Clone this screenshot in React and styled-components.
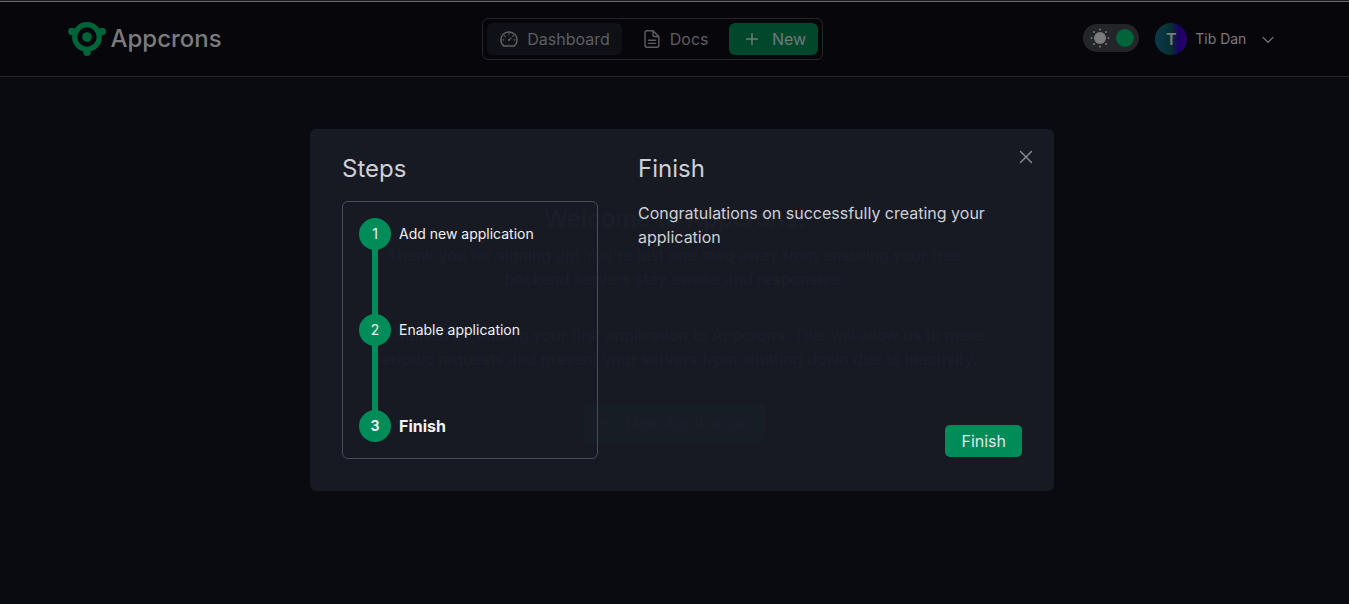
import React from 'react';
import styled, { createGlobalStyle } from 'styled-components';
import { AiOutlineDashboard } from 'react-icons/ai';

const Global = createGlobalStyle`
  * { box-sizing: border-box; }
  body { margin: 0; background: #0a0b10; color: #7b7b7e; font: 400 16px/24px Inter, sans-serif; overflow: hidden; }
  h1, h2, p { margin: 0; font-weight: 400; }
  button { font: inherit; color: inherit; border: 0; background: none; padding: 0; }
  svg { display: block; flex: none; }
`;
const Page = styled.div`
  height: 604px;
  border-top: 1px solid #1b1b1f;
`;
const Header = styled.header`
  height: 76px;
  padding: 0 75px 0 68px;
  display: flex;
  justify-content: space-between;
  align-items: center;
  background: #06060b;
  border-top: 1px solid #68686a;
  border-bottom: 1px solid #242529;
`;
const Brand = styled.div`
  display: flex;
  align-items: center;
  gap: 4.5px;
  font-size: 24px;
  font-weight: 500;
`;
const Nav = styled.nav`
  display: flex;
  align-items: center;
  gap: 8px;
  height: 42px;
  padding: 4px;
  border: 1px solid #252529;
  border-radius: 6px;
  color: #5e5e63;
`;
const NavItem = styled.a`
  display: flex;
  align-items: center;
  gap: 8px;
  height: 32px;
  padding: 0 12px;
  border-radius: 6px;
  background: ${(p) => (p.$active ? '#101116' : 'transparent')};
`;
const NewItem = styled(NavItem)`
  gap: 14px;
  padding: 0 11.5px 0 17.5px;
  background: #00472c;
  color: #727a78;
`;
const Account = styled.div`
  display: flex;
  align-items: center;
  font-size: 14px;
`;
const Toggle = styled.div`
  width: 56px;
  height: 28px;
  border-radius: 14px;
  background: #242529;
  display: flex;
  align-items: center;
  justify-content: space-between;
  padding: 0 5px 0 7px;
  margin: 0 16px 2px 0;
`;
const Knob = styled.span`
  width: 18px;
  height: 18px;
  border-radius: 50%;
  background: #00643b;
`;
const Avatar = styled.div`
  width: 32px;
  height: 32px;
  border-radius: 50%;
  background: linear-gradient(90deg, #0c3a50, #06302e 50%, #1c0065 75%, #280070);
  display: grid;
  place-items: center;
  font-weight: 600;
  font-size: 16px;
  margin-right: 8px;
`;
const UserName = styled.span`
  margin-right: 15.6px;
`;
const Main = styled.main`
  display: flex;
  justify-content: center;
  padding-top: 99px;
`;
const Welcome = styled.section`
  width: 700px;
  padding: 26px 0 32px;
  border: 1px solid #242529;
  border-radius: 6px;
  text-align: center;
  color: #66666b;
  display: flex;
  flex-direction: column;
  align-items: center;
`;
const WelcomeTitle = styled.h2`
  font-size: 24px;
  line-height: 32px;
  font-weight: 500;
  margin-bottom: 8px;
`;
const WelcomeText = styled.p`
  margin-bottom: 32px;
`;
const NewApplication = styled.button`
  display: flex;
  align-items: center;
  gap: 14px;
  height: 40px;
  padding: 0 16px;
  border-radius: 6px;
  background: #00593a;
`;
const Dialog = styled.section`
  position: absolute;
  left: 310px;
  top: 129px;
  width: 744px;
  height: 362px;
  padding: 24px 32px 32px;
  border-radius: 6px;
  background: rgba(24, 27, 36, 0.96);
  color: #cfd0d8;
  display: grid;
  grid-template-columns: 256px 1fr;
  column-gap: 40px;
`;
const Column = styled.div`
  display: flex;
  flex-direction: column;
`;
const Title = styled.h2`
  font-size: 24px;
  line-height: 32px;
  margin-bottom: 16px;
`;
const Steps = styled.div`
  height: 258px;
  border: 1px solid #494b56;
  border-radius: 6px;
  padding: 16px;
`;
const Step = styled.div`
  display: flex;
  align-items: center;
  gap: 8px;
  height: 32px;
  color: #f1f1f3;
  font-size: ${(p) => (p.$current ? 16 : 14)}px;
  font-weight: ${(p) => (p.$current ? 700 : 400)};
`;
const StepNumber = styled.span`
  width: 32px;
  height: 32px;
  border-radius: 50%;
  background: #008c59;
  display: grid;
  place-items: center;
  font-size: 14px;
`;
const Connector = styled.div`
  width: 6px;
  height: 66px;
  margin: -1px 0 -1px 13px;
  background: #008c59;
`;
const Close = styled.button`
  position: absolute;
  right: 21px;
  top: 21px;
  color: #8c8e98;
`;
const FinishButton = styled.button`
  height: 32px;
  padding: 0 16px;
  border-radius: 5px;
  background: #008c59;
  color: #dfe9e6;
  align-self: flex-end;
  margin: auto 0 2px;
`;

const Logo = () => (
  <svg width="38" height="34" viewBox="0 0 38 34" fill="#00643b">
    <circle cx="19" cy="15" r="12.3" fill="none" stroke="#00643b" strokeWidth="5.2" />
    <circle cx="19" cy="15" r="4.8" />
    <circle cx="3.8" cy="9.5" r="3.7" />
    <circle cx="34.2" cy="9.5" r="3.7" />
    <circle cx="19" cy="30.2" r="3.7" />
  </svg>
);
const Sun = () => (
  <svg width="20" height="20" viewBox="0 0 20 20" fill="#7b7b7e">
    <circle cx="10" cy="10" r="6" />
    {[0, 45, 90, 135, 180, 225, 270, 315].map((a) => (
      <circle key={a} cx="10" cy="1.5" r="0.95" transform={`rotate(${a} 10 10)`} />
    ))}
  </svg>
);
const FileText = () => (
  <svg width="20" height="20" viewBox="0 0 20 20" fill="none" stroke="currentColor" strokeWidth="1.4" strokeLinecap="round" strokeLinejoin="round">
    <path d="M11 1.7H5a2 2 0 0 0-2 2v12.6a2 2 0 0 0 2 2h9.8a2 2 0 0 0 2-2V7.5L11 1.7v4.2a1.6 1.6 0 0 0 1.6 1.6h4.2M6.5 11.2h7M6.5 14.4h7" />
  </svg>
);
const Plus = () => (
  <svg width="12" height="12" viewBox="0 0 12 12" stroke="currentColor" strokeWidth="1.4">
    <path d="M6 0v12M0 6h12" />
  </svg>
);
const Chevron = () => (
  <svg width="12" height="12" viewBox="0 0 12 12" fill="none" stroke="currentColor" strokeWidth="1.2" strokeLinecap="round" strokeLinejoin="round">
    <path d="M1 4.3l5 5 5-5" />
  </svg>
);
const Cross = () => (
  <svg width="14" height="14" viewBox="0 0 14 14" stroke="currentColor" strokeWidth="1.4" strokeLinecap="round">
    <path d="M1.5 1.5l11 11M12.5 1.5l-11 11" />
  </svg>
);
const steps = ['Add new application', 'Enable application', 'Finish'];

export default function App() {
  return (
    <Page>
      <Global />
      <Header>
        <Brand><Logo />Appcrons</Brand>
        <Nav>
          <NavItem $active><AiOutlineDashboard size={20} />Dashboard</NavItem>
          <NavItem><FileText />Docs</NavItem>
          <NewItem><Plus />New</NewItem>
        </Nav>
        <Account>
          <Toggle><Sun /><Knob /></Toggle>
          <Avatar>T</Avatar>
          <UserName>Tib Dan</UserName>
          <Chevron />
        </Account>
      </Header>
      <Main>
        <Welcome>
          <WelcomeTitle>Welcome to Appcrons!</WelcomeTitle>
          <WelcomeText>Thank you for signing up! You're just one step away from ensuring your free<br />backend servers stay awake and responsive.</WelcomeText>
          <WelcomeText>Get Started by adding your first application to Appcrons. This will allow us to make<br />periodic requests and prevent your servers from shutting down due to inactivity.</WelcomeText>
          <NewApplication><Plus />New Application</NewApplication>
        </Welcome>
      </Main>
      <Dialog>
        <Column>
          <Title>Steps</Title>
          <Steps>
            {steps.map((label, i) => (
              <React.Fragment key={label}>
                {i > 0 && <Connector />}
                <Step $current={i === 2}><StepNumber>{i + 1}</StepNumber>{label}</Step>
              </React.Fragment>
            ))}
          </Steps>
        </Column>
        <Column>
          <Title>Finish</Title>
          <p>Congratulations on successfully creating your application</p>
          <FinishButton>Finish</FinishButton>
        </Column>
        <Close aria-label="Close"><Cross /></Close>
      </Dialog>
    </Page>
  );
}
